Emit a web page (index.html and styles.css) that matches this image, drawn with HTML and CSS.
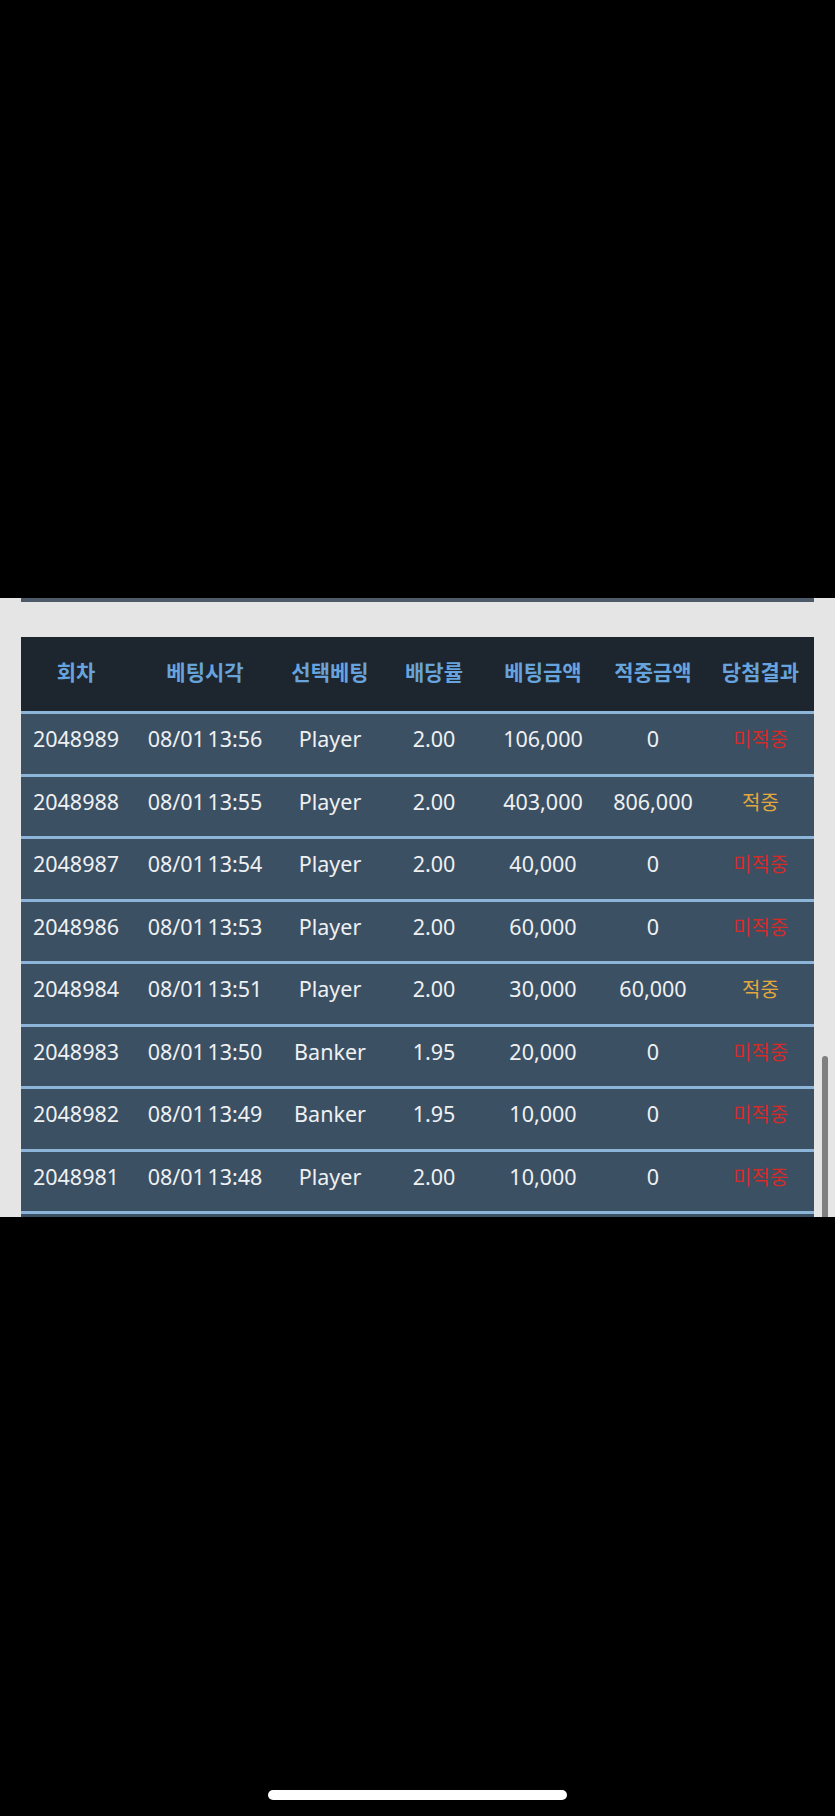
FILE: index.html
```html
<!DOCTYPE html>
<html lang="ko">
<head>
<meta charset="utf-8">
<title>베팅내역</title>
<link rel="stylesheet" href="styles.css">
</head>
<body>
<div class="top"></div>
<div class="panel">
  <div class="strip"></div>
  <div class="table">
    <div class="row head">
      <div>회차</div><div>베팅시각</div><div>선택베팅</div><div>배당률</div><div>베팅금액</div><div>적중금액</div><div>당첨결과</div>
    </div>
    <div class="row"><div>2048989</div><div class="time">08/01 13:56</div><div>Player</div><div>2.00</div><div>106,000</div><div>0</div><div class="lose">미적중</div></div>
    <div class="row"><div>2048988</div><div class="time">08/01 13:55</div><div>Player</div><div>2.00</div><div>403,000</div><div>806,000</div><div class="win">적중</div></div>
    <div class="row"><div>2048987</div><div class="time">08/01 13:54</div><div>Player</div><div>2.00</div><div>40,000</div><div>0</div><div class="lose">미적중</div></div>
    <div class="row"><div>2048986</div><div class="time">08/01 13:53</div><div>Player</div><div>2.00</div><div>60,000</div><div>0</div><div class="lose">미적중</div></div>
    <div class="row"><div>2048984</div><div class="time">08/01 13:51</div><div>Player</div><div>2.00</div><div>30,000</div><div>60,000</div><div class="win">적중</div></div>
    <div class="row"><div>2048983</div><div class="time">08/01 13:50</div><div>Banker</div><div>1.95</div><div>20,000</div><div>0</div><div class="lose">미적중</div></div>
    <div class="row"><div>2048982</div><div class="time">08/01 13:49</div><div>Banker</div><div>1.95</div><div>10,000</div><div>0</div><div class="lose">미적중</div></div>
    <div class="row"><div>2048981</div><div class="time">08/01 13:48</div><div>Player</div><div>2.00</div><div>10,000</div><div>0</div><div class="lose">미적중</div></div>
    <div class="row"><div></div><div></div><div></div><div></div><div></div><div></div><div></div></div>
  </div>
  <div class="scrollbar"></div>
</div>
<div class="bottom"><div class="home"></div></div>
</body>
</html>
```
FILE: styles.css
```css
html, body {
  margin: 0;
  padding: 0;
  background: #000;
}
body {
  width: 835px;
  font-family: "Noto Sans", "Noto Sans CJK KR", sans-serif;
}
.top {
  height: 598px;
  background: #000;
}
.panel {
  position: relative;
  height: 619px;
  overflow: hidden;
  background: #e5e5e5;
  padding-left: 21px;
  box-sizing: border-box;
}
.strip {
  width: 793px;
  height: 4px;
  background: #4d5a69;
  margin-bottom: 35px;
}
.table {
  width: 793px;
}
.row {
  display: grid;
  grid-template-columns: 110px 148px 102px 106px 112px 108px 107px;
  align-items: center;
  height: 62.5px;
  box-sizing: border-box;
  border-top: 3px solid #8db5d9;
  background: #3c5064;
  color: #eef0f2;
  font-size: 21.5px;
  text-align: center;
  padding-bottom: 10px;
}
.row > div {
  white-space: nowrap;
}
.row .time {
  word-spacing: -3px;
}
.row.head {
  height: 74px;
  border-top: 0;
  background: #1d252e;
  color: #67a3dc;
  font-family: "Noto Sans CJK KR", sans-serif;
  font-weight: 700;
  font-size: 21px;
  padding-bottom: 6px;
}
.lose {
  color: #d42b27;
  font-family: "Noto Sans CJK KR", sans-serif;
  font-size: 20px;
}
.win {
  color: #e3a83c;
  font-family: "Noto Sans CJK KR", sans-serif;
  font-size: 20px;
}
.scrollbar {
  position: absolute;
  left: 822px;
  top: 458px;
  width: 6px;
  height: 200px;
  border-radius: 3px;
  background: #808080;
}
.bottom {
  height: 599px;
  background: #000;
  display: flex;
  justify-content: center;
  align-items: flex-start;
}
.home {
  width: 299px;
  height: 10px;
  border-radius: 5px;
  background: #fff;
  margin-top: 573px;
}
```
